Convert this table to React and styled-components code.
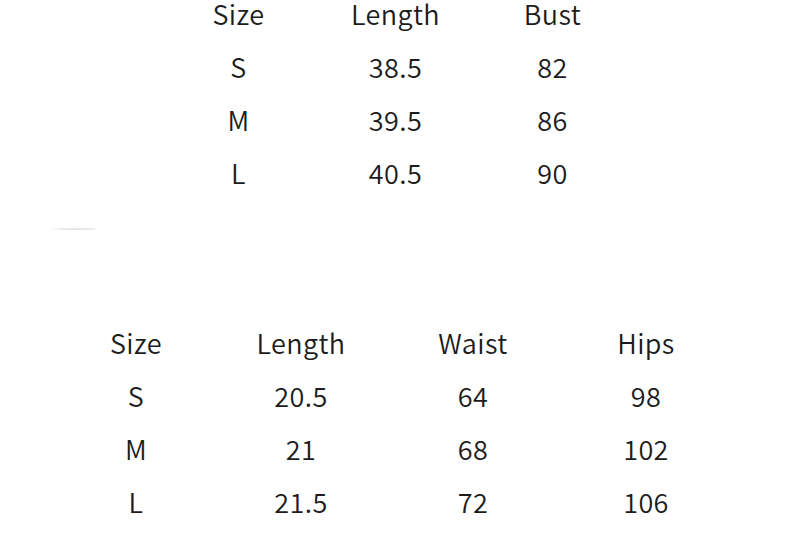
import React from "react";
import styled, { createGlobalStyle } from "styled-components";

const Global = createGlobalStyle`
  html, body { margin: 0; padding: 0; background: #ffffff; }
  body { font-family: "Noto Sans CJK SC", "Noto Sans", sans-serif; color: #1c1c1c; }
`;

const Page = styled.div`
  width: 799px;
  height: 549px;
  overflow: hidden;
  background: #ffffff;
  display: flex;
  flex-direction: column;
  padding-top: 2px;
  box-sizing: border-box;
`;

const Table = styled.div`
  display: grid;
  grid-template-columns: ${(p) => p.$cols};
  row-gap: 29px;
  margin-left: ${(p) => p.$left}px;
  margin-top: ${(p) => p.$top}px;
`;

const Cell = styled.div`
  height: 24px;
  line-height: 24px;
  font-size: 27px;
  font-weight: 350;
  text-align: center;
  white-space: nowrap;
  letter-spacing: 0.4px;
`;

const Divider = styled.div`
  width: 42px;
  height: 2px;
  margin: 43px 0 0 53px;
  background: linear-gradient(90deg, rgba(225,225,225,0.2), rgba(225,225,225,0.9) 40%, rgba(225,225,225,0.6));
`;

const top = [
  ["Size", "Length", "Bust"],
  ["S", "38.5", "82"],
  ["M", "39.5", "86"],
  ["L", "40.5", "90"],
];

const bottom = [
  ["Size", "Length", "Waist", "Hips"],
  ["S", "20.5", "64", "98"],
  ["M", "21", "68", "102"],
  ["L", "21.5", "72", "106"],
];

function SizeTable({ rows, cols, left, top: mt }) {
  return (
    <Table $cols={cols} $left={left} $top={mt}>
      {rows.flatMap((r, i) => r.map((c, j) => <Cell key={`${i}-${j}`}>{c}</Cell>))}
    </Table>
  );
}

export default function App() {
  return (
    <>
      <Global />
      <Page>
        <SizeTable rows={top} cols="157px 157px 157px" left={160} top={0} />
        <Divider />
        <SizeTable rows={bottom} cols="164px 166px 178px 168px" left={54} top={101} />
      </Page>
    </>
  );
}
